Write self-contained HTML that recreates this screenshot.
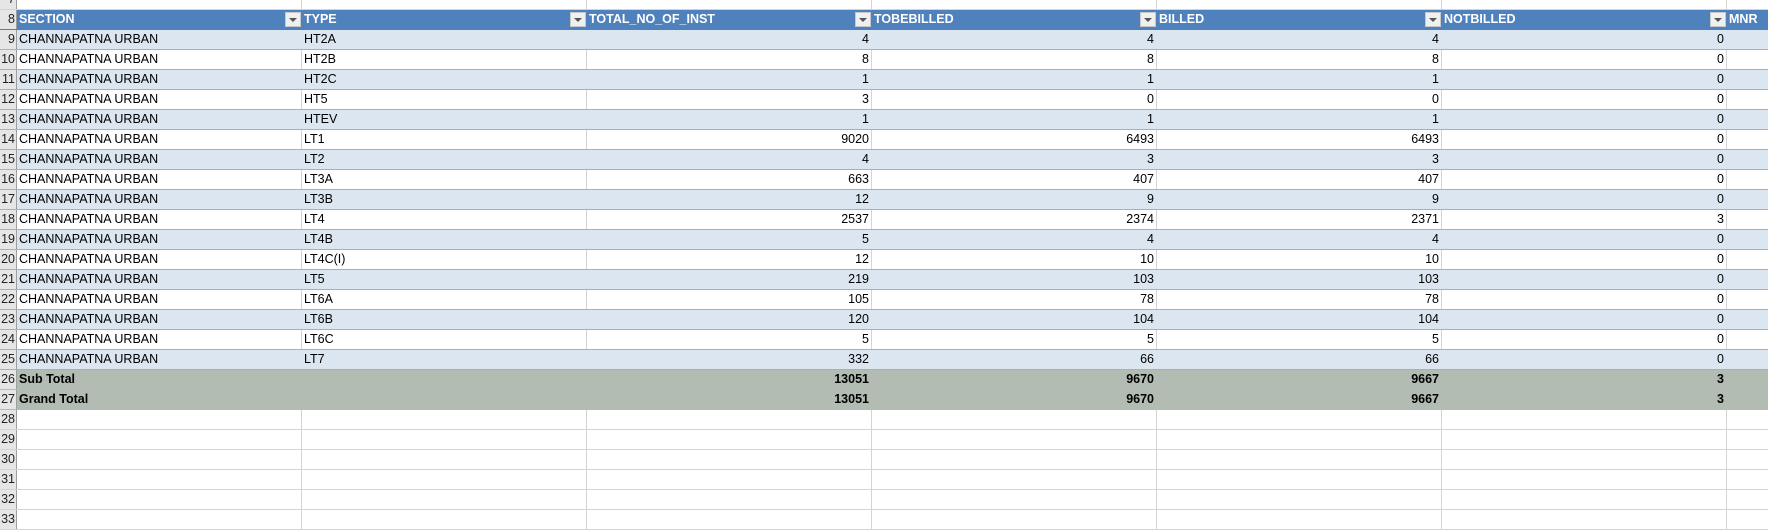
<!DOCTYPE html>
<html><head><meta charset="utf-8"><style>
*{margin:0;padding:0;box-sizing:border-box}
body{width:1768px;height:526px;overflow:hidden;background:#fff;font-family:"Liberation Sans",Arial,sans-serif;font-size:12.5px;color:#000}
.r{position:absolute;left:0;height:20px;width:1768px;display:flex;border-bottom:1px solid #d4d4d4}
.c{height:19px;line-height:19px;padding:0 2px;white-space:nowrap;overflow:hidden;border-right:1px solid #d4d4d4;position:relative;flex:none}
.n{width:17px;background:#e6e6e6;border-right:1px solid #9e9e9e;text-align:right;padding:0 1px 0 0;color:#222;direction:rtl}
.w{width:285px}.l{width:41px;border-right:none}
.num{text-align:right}
.h{background:#4f81bd;border-bottom:1px solid #4f81bd}
.h .c:not(.n){color:#fff;font-weight:bold;border-right:none}
.b{background:#dce6f1;border-bottom:1px solid #95b3d7}
.b .c:not(.n){border-right-color:transparent}
.wr{border-bottom:1px solid #95b3d7}
.t{background:#b2bcb3;border-bottom:none}
.t .c:not(.n){border-right-color:transparent;font-weight:bold}
.f{position:absolute;right:1px;top:2px;width:16px;height:15px;background:#f0f0f0;border:1px solid #c8c8c8}
.f:after{content:"";position:absolute;left:3px;top:5px;border-left:4px solid transparent;border-right:4px solid transparent;border-top:4px solid #555}
</style></head><body>
<div class="r" style="top:-10px"><div class="c n">7</div><div class="c w"></div><div class="c w"></div><div class="c w"></div><div class="c w"></div><div class="c w"></div><div class="c w"></div><div class="c l"></div></div>
<div class="r h" style="top:10px"><div class="c n">8</div><div class="c w">SECTION<span class="f"></span></div><div class="c w">TYPE<span class="f"></span></div><div class="c w">TOTAL_NO_OF_INST<span class="f"></span></div><div class="c w">TOBEBILLED<span class="f"></span></div><div class="c w">BILLED<span class="f"></span></div><div class="c w">NOTBILLED<span class="f"></span></div><div class="c l">MNR</div></div>
<div id="body"></div>
<script>
(function(){
var d=[["HT2A",4,4,4,0],["HT2B",8,8,8,0],["HT2C",1,1,1,0],["HT5",3,0,0,0],["HTEV",1,1,1,0],["LT1",9020,6493,6493,0],["LT2",4,3,3,0],["LT3A",663,407,407,0],["LT3B",12,9,9,0],["LT4",2537,2374,2371,3],["LT4B",5,4,4,0],["LT4C(I)",12,10,10,0],["LT5",219,103,103,0],["LT6A",105,78,78,0],["LT6B",120,104,104,0],["LT6C",5,5,5,0],["LT7",332,66,66,0]];
var h="";
d.forEach(function(x,i){var n=9+i,y=10+(n-8)*20;
h+='<div class="r '+(i%2==0?'b':'wr')+'" style="top:'+y+'px"><div class="c n">'+n+'</div><div class="c w">CHANNAPATNA URBAN</div><div class="c w">'+x[0]+'</div><div class="c w num">'+x[1]+'</div><div class="c w num">'+x[2]+'</div><div class="c w num">'+x[3]+'</div><div class="c w num">'+x[4]+'</div><div class="c l"></div></div>';});
[["Sub Total",26],["Grand Total",27]].forEach(function(x){var y=10+(x[1]-8)*20;
h+='<div class="r t" style="top:'+y+'px"><div class="c n">'+x[1]+'</div><div class="c w">'+x[0]+'</div><div class="c w"></div><div class="c w num">13051</div><div class="c w num">9670</div><div class="c w num">9667</div><div class="c w num">3</div><div class="c l"></div></div>';});
for(var n=28;n<=33;n++){var y=10+(n-8)*20;h+='<div class="r" style="top:'+y+'px"><div class="c n">'+n+'</div><div class="c w"></div><div class="c w"></div><div class="c w"></div><div class="c w"></div><div class="c w"></div><div class="c w"></div><div class="c l"></div></div>';}
document.getElementById("body").innerHTML=h;
})();
</script>
</body></html>
